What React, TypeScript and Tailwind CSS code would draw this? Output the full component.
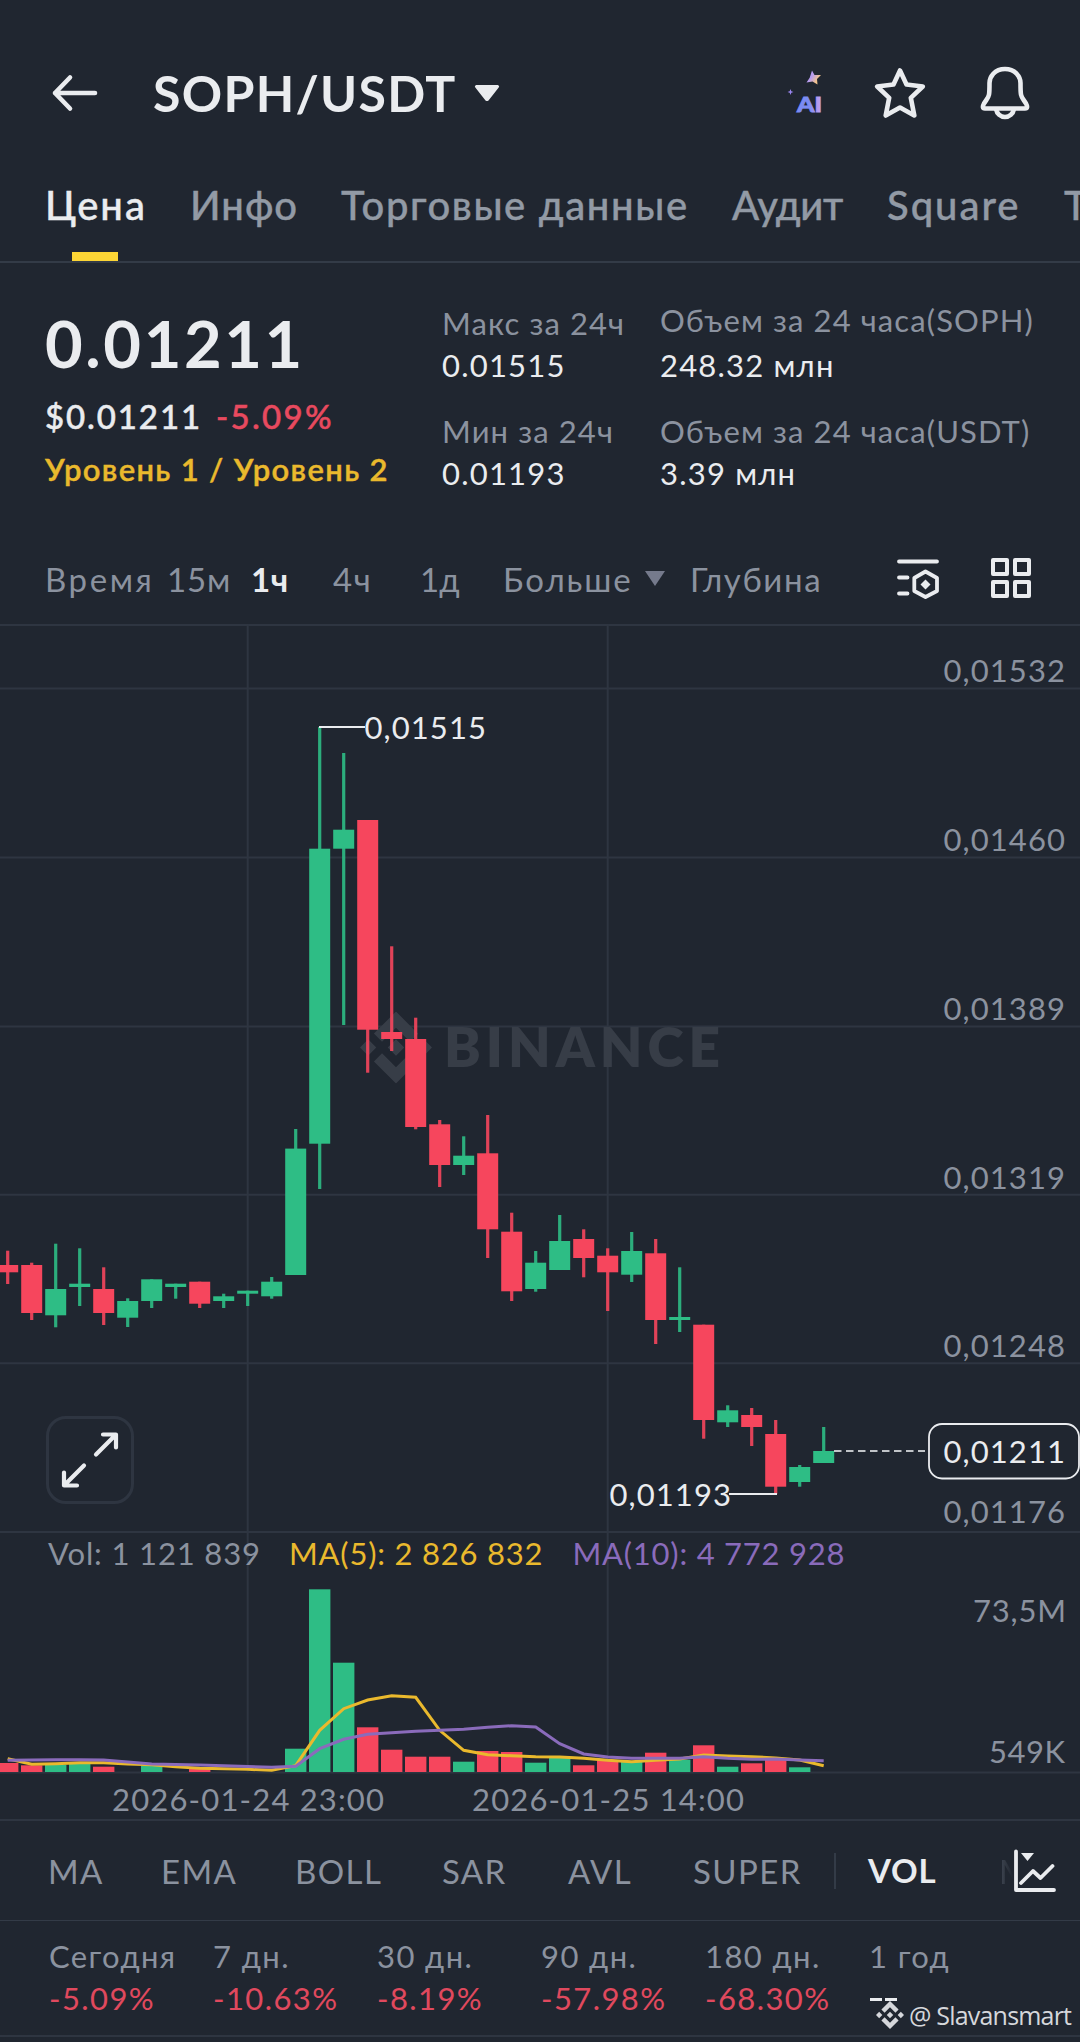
import clsx from "clsx";

const UP = "#2ebd85";
const DOWN = "#f6465d";
const STEP = 24;
const FIRST_X = 7.7;
const VOL_BASE = 1772;

// [direction, body top, body bottom, wick top, wick bottom]
const candles: [number, number, number, number, number][] = [
  [0, 1265, 1272.3, 1250.7, 1284],
  [0, 1265, 1313, 1262.7, 1320],
  [1, 1289, 1315.3, 1243.7, 1327.3],
  [1, 1283.7, 1287, 1248.3, 1306],
  [0, 1289, 1313, 1267.3, 1325],
  [1, 1301, 1317.7, 1298.3, 1327],
  [1, 1279.3, 1301, 1279.3, 1308],
  [1, 1283.7, 1287, 1283.7, 1298.7],
  [0, 1281.7, 1303.7, 1281.7, 1308],
  [1, 1296.3, 1301, 1293.7, 1308],
  [1, 1290.7, 1293.7, 1290.7, 1306],
  [1, 1281.7, 1296.3, 1277, 1298.7],
  [1, 1148.6, 1275, 1129, 1275],
  [1, 848.7, 1143.7, 727, 1189],
  [1, 829.7, 848.7, 753, 1025],
  [0, 820, 1029.7, 820, 1072.7],
  [0, 1032, 1039, 946.3, 1051],
  [0, 1039, 1127, 1017.7, 1129.3],
  [0, 1124.3, 1165, 1120, 1187],
  [1, 1155.7, 1165, 1136.3, 1175],
  [0, 1153.3, 1229.3, 1115, 1258],
  [0, 1231.7, 1291.3, 1212.7, 1301],
  [1, 1262.7, 1289, 1251, 1291.7],
  [1, 1241, 1270, 1215, 1270],
  [0, 1239, 1258, 1229.3, 1277.3],
  [0, 1255.7, 1272.3, 1248.3, 1311],
  [1, 1251, 1274.7, 1232, 1282],
  [0, 1253.3, 1320, 1239, 1344],
  [1, 1317, 1320, 1267.3, 1332],
  [0, 1324.7, 1420, 1324.7, 1438.7],
  [1, 1410.3, 1422.3, 1405.3, 1427],
  [0, 1415, 1427, 1408, 1446],
  [0, 1434, 1486.7, 1420, 1494],
  [1, 1467, 1482, 1465, 1486.7],
  [1, 1451, 1463, 1427, 1463],
];

const volumes = [
  9, 6.7, 7.3, 8.3, 5.3, 0, 6.3, 0, 3, 0, 0, 0, 23.3, 182.7, 109.3, 44.7, 22.3, 15.3, 15.3, 10.3, 21, 20, 9.3, 14, 6.7,
  11.7, 10, 19.3, 12.3, 26.7, 5.3, 8.7, 12.3, 4.7, 0,
];
const ma5 = [
  13.3, 7.7, 8.3, 9.3, 9.3, 8, 7.3, 5.3, 3.7, 3.3, 2.7, 1.7, 6.3, 41.7, 63.3, 72, 76.3, 74.7, 41.7, 21.7, 17.3, 16.3,
  15.3, 15, 13.7, 11.7, 10.3, 11.7, 13, 17, 16, 15.3, 14, 12, 6.3,
];
const ma10 = [
  11.7, 12, 12.3, 12.3, 12, 10, 8, 7.5, 7, 6.3, 5.5, 4.7, 5.7, 23.3, 32.7, 37.7, 39.3, 40.7, 41.7, 42.7, 44.7, 46.3,
  45, 28.3, 18, 15, 13.7, 13.7, 13.7, 15.3, 13.7, 12.7, 13, 12, 11.3,
];

const priceLines = [
  { y: 688.5, label: "0,01532" },
  { y: 857.5, label: "0,01460" },
  { y: 1026.5, label: "0,01389" },
  { y: 1194.7, label: "0,01319" },
  { y: 1363.3, label: "0,01248" },
];

const tabs = [
  { name: "Цена", cls: "w-[145px] tracking-[2px]" },
  { name: "Инфо", cls: "w-[151px] tracking-[1px]" },
  { name: "Торговые данные", cls: "w-[391px] tracking-[1.65px]" },
  { name: "Аудит", cls: "w-[155px] -tracking-[0.3px]" },
  { name: "Square", cls: "w-[177px] tracking-[2px]" },
  { name: "Т", cls: "" },
];

const indicators = [
  { name: "MA", cls: "w-[113px]" },
  { name: "EMA", cls: "w-[134px]" },
  { name: "BOLL", cls: "w-[147px]" },
  { name: "SAR", cls: "w-[126px]" },
  { name: "AVL", cls: "w-[125px]" },
  { name: "SUPER", cls: "w-[141px]" },
];

const periods = [
  { name: "Сегодня", value: "-5.09%" },
  { name: "7 дн.", value: "-10.63%" },
  { name: "30 дн.", value: "-8.19%" },
  { name: "90 дн.", value: "-57.98%" },
  { name: "180 дн.", value: "-68.30%" },
  { name: "1 год", value: "--" },
];

const x = (i: number) => FIRST_X + i * STEP;
const line = (values: number[]) => values.map((v, i) => `${x(i)},${VOL_BASE - v}`).join(" ");

function BinanceMark(props: React.SVGProps<SVGSVGElement>) {
  return (
    <svg viewBox="0 0 126.61 126.61" {...props}>
      <path d="M38.73 53.2 63.3 28.63 87.89 53.21 102.19 38.91 63.3 0 24.43 38.9ZM0 63.31 14.3 49 28.6 63.31 14.3 77.61ZM38.73 73.41 63.3 97.98 87.89 73.4 102.2 87.69 63.3 126.61 24.43 87.74ZM98 63.31 112.3 49 126.6 63.3 112.3 77.61ZM77.83 63.3 63.3 48.78 48.77 63.3 63.3 77.82Z" />
    </svg>
  );
}

function Header() {
  return (
    <div className="flex items-center h-24 mt-[45px] pl-[50px] pr-[49px]">
      <svg className="w-12 h-10 shrink-0" viewBox="0 0 48 40" fill="none" stroke="#eaecef" strokeWidth="4.6" strokeLinecap="round" strokeLinejoin="round">
        <path d="M20 4.5 5 20l15 15.5M5 20h40" />
      </svg>
      <div className="ml-[55px] text-[50px] leading-none font-bold tracking-[1.3px] text-[#eaecef]">SOPH/USDT</div>
      <svg className="w-[26px] h-[18px] ml-[17px]" viewBox="0 0 26 18">
        <path d="M2 1h22q2 1 .7 2.5L14.5 16.5q-1.5 1.2-3 0L1.3 3.5Q0 2 2 1Z" fill="#eaecef" />
      </svg>
      <svg className="w-9 h-[46px] ml-auto" viewBox="0 0 36 46">
        <defs>
          <linearGradient id="ai" x1="0" x2="1">
            <stop offset="0.5" stopColor="#7b8cf3" />
            <stop offset="1" stopColor="#c9a2f0" />
          </linearGradient>
          <linearGradient id="spark" x1="0" y1="0" x2="1" y2="0.6">
            <stop offset="0.45" stopColor="#b79cf0" />
            <stop offset="0.85" stopColor="#f3c48c" />
          </linearGradient>
        </defs>
        <path d="m26 .5 2.5 4.500 6.500 0-4 4 .5 5.500-5-3-6 1 3.200-4.800Z" fill="url(#spark)" />
        <path d="m4.500 19 .8 2.200 2.200.8-2.200.8-.8 2.200-.8-2.200L1.500 22l2.200-.8Z" fill="#9a86f0" />
        <text x="11" y="41.500" fill="url(#ai)" stroke="url(#ai)" strokeWidth="0.8" className="text-[20px] font-black" textLength="25" lengthAdjust="spacingAndGlyphs">AI</text>
      </svg>
      <svg className="w-[52px] h-[54px] ml-[52px]" viewBox="0 0 52 54" fill="none" stroke="#eaecef" strokeWidth="4.6" strokeLinejoin="round">
        <path d="m26 4.5 6.5 14 16.3 2-12 11.300 3.500 17.700L26 41.500l-14.300 8 3.500-17.700-12-11.300 16.300-2Z" />
      </svg>
      <svg className="w-[52px] h-[54px] ml-[53px]" viewBox="0 0 52 54" fill="none" stroke="#eaecef" strokeWidth="4.6" strokeLinejoin="round">
        <path d="M26 3C15.500 3 10.500 11 10.500 17c0 15.500-.5 12.500-5.500 20.500-1.600 3-1.500 5 1 5h40c2.500 0 2.600-2 1-5-5-8-5.500-5-5.500-20.500C41.500 11 36.500 3 26 3Z" />
        <path d="M17 43c1 5 4.500 8 9 8s8-3 9-8" />
      </svg>
    </div>
  );
}

function Tabs() {
  return (
    <div className="flex items-center h-[122px] pt-2 pl-[45px] overflow-hidden border-b-2 border-[#333b47] text-[40px] font-medium [-webkit-text-stroke:0.4px] relative">
      {tabs.map((t, i) => (
        <div key={t.name} className={clsx("shrink-0 whitespace-nowrap", t.cls, i === 0 ? "text-[#eaecef]" : "text-[#929aa5]")}>
          {t.name}
        </div>
      ))}
      <div className="absolute left-[72px] bottom-0 w-[46px] h-[9px] bg-[#fcd535]" />
    </div>
  );
}

function Stat({ label, value, cls }: { label: string; value: string; cls?: string }) {
  return (
    <div className="flex flex-col leading-[42px] text-[31px] whitespace-nowrap">
      <div className={clsx("text-[#8b929f] tracking-[1.1px]", cls)}>{label}</div>
      <div className="text-[#eaecef] tracking-[1.2px]">{value}</div>
    </div>
  );
}

function Summary() {
  return (
    <div className="flex h-[269px] pl-[45px]">
      <div className="w-[397px] pt-8 whitespace-nowrap">
        <div className="text-[65px] leading-[96px] font-bold tracking-[2.6px] text-[#eaecef]">0.01211</div>
        <div className="flex gap-[14px] text-[33px] leading-[50px] font-medium [-webkit-text-stroke:0.5px]">
          <span className="text-[#eaecef] tracking-[1.9px]">$0.01211</span>
          <span className="text-[#e84a5f] tracking-[2.3px]">-5.09%</span>
        </div>
        <div className="text-[31px] leading-[56px] font-semibold tracking-[1.35px] text-[#eab92d] [-webkit-text-stroke:0.4px]">Уровень 1 / Уровень 2</div>
      </div>
      <div className="w-[218px] pt-[39px] flex flex-col gap-6">
        <Stat label="Макс за 24ч" value="0.01515" />
        <Stat label="Мин за 24ч" value="0.01193" />
      </div>
      <div className="pt-9 flex flex-col gap-6">
        <Stat label="Объем за 24 часа(SOPH)" value="248.32 млн" cls="pb-[3px]" />
        <Stat label="Объем за 24 часа(USDT)" value="3.39 млн" />
      </div>
    </div>
  );
}

function Toolbar() {
  return (
    <div className="flex items-center h-[92px] pl-[45px] text-[33px] leading-[42px] text-[#8b929f] whitespace-nowrap">
      <div className="w-[122px] pt-px tracking-[2.6px]">Время</div>
      <div className="w-[84px] pt-px tracking-[0.8px]">15м</div>
      <div className="w-[82px] pt-px font-bold tracking-[0.5px] text-[#eaecef]">1ч</div>
      <div className="w-[87px] pt-px tracking-[1.5px]">4ч</div>
      <div className="w-[83px] pt-px">1д</div>
      <div className="w-[142px] pt-px tracking-[1.9px]">Больше</div>
      <svg className="w-5 h-[15px] mr-[25px]" viewBox="0 0 20 15">
        <path d="M0 0h20L10 15Z" fill="#757a8c" />
      </svg>
      <div className="pt-px tracking-[1.6px]">Глубина</div>
      <svg className="w-[42px] h-10 ml-auto mt-0.5" viewBox="0 0 42 40" fill="none" stroke="#eaecef" strokeWidth="3.8" strokeLinecap="round" strokeLinejoin="round">
        <path d="M2 2.500h38M2 18.500h8.500M2 34.500h8.500" />
        <path d="M28.500 12.500 40 19v13L28.500 38 17.300 32V19Z" />
        <path d="m28.500 20.500 5 5-5 5-5-5Z" fill="#eaecef" stroke="none" />
      </svg>
      <svg className="w-10 h-10 ml-[52px] mr-[49px]" viewBox="0 0 40 40" fill="none" stroke="#eaecef" strokeWidth="4" strokeLinejoin="round">
        <path d="M2 2h14v14H2ZM24 2h14v14H24ZM2 24h14v14H2ZM24 24h14v14H24Z" />
      </svg>
    </div>
  );
}

function Chart() {
  return (
    <div className="relative">
      <svg className="block w-[1080px] h-[1197px] text-[31px]" viewBox="0 624 1080 1197" fill="#8b929f">
        <g stroke="#2e3541" strokeWidth="2">
          <path d="M0 625h1080" />
          {priceLines.map((p) => (
            <path key={p.label} d={`M0 ${p.y}h1080`} />
          ))}
          <path d="M0 1532h1080M0 1772.500h1080M0 1820h1080M247.700 624v1148M607.700 624v1148" />
        </g>

        <BinanceMark x="360" y="1011.5" width="72" height="72" fill="#373d47" />
        <text x="444" y="1067" fill="#373d47" className="text-[55px] font-extrabold" textLength="276">BINANCE</text>

        {candles.map(([dir, top, bottom, high, low], i) => (
          <g key={i} fill={dir ? UP : DOWN}>
            <rect x={x(i) - 1.6} y={high} width="3.2" height={low - high} opacity="0.9" />
            <rect x={x(i) - 10.5} y={top} width="21" height={bottom - top} />
          </g>
        ))}

        {volumes.map((v, i) => (
          <rect key={i} x={x(i) - 10.7} y={VOL_BASE - v} width="21.4" height={v} fill={candles[i][0] ? UP : DOWN} />
        ))}
        <polyline points={line(ma5)} fill="none" stroke="#eab92d" strokeWidth="3" />
        <polyline points={line(ma10)} fill="none" stroke="#8a6bbb" strokeWidth="3" />

        <g stroke="#eaecef" strokeWidth="2">
          <path d="M319 727h46M729 1494h48" />
          <path d="M834 1451h91" strokeDasharray="7.5 4.5" opacity="0.8" />
        </g>
        <g fill="#eaecef">
          <text x="364.5" y="739" textLength="121.5">0,01515</text>
          <text x="609.5" y="1505.7" textLength="121.5">0,01193</text>
        </g>

        {priceLines.map((p) => (
          <text key={p.label} x="943.5" y={p.y - 6.2} textLength="121.5">{p.label}</text>
        ))}
        <text x="943.5" y="1523" textLength="121.5">0,01176</text>
        <rect x="929" y="1424" width="150" height="54.5" rx="13" fill="#202630" stroke="#eaecef" strokeWidth="1.8" />
        <text x="943.5" y="1463" textLength="121.5" fill="#eaecef">0,01211</text>

        <text x="48" y="1565" textLength="212">Vol: 1 121 839</text>
        <text x="289" y="1565" textLength="253.5" fill="#eab92d">MA(5): 2 826 832</text>
        <text x="572.5" y="1565" textLength="272" fill="#8a6bbb">MA(10): 4 772 928</text>
        <text x="973" y="1622" textLength="93">73,5M</text>
        <text x="989" y="1763" textLength="76">549K</text>
        <text x="112" y="1811" textLength="272">2026-01-24 23:00</text>
        <text x="472" y="1811" textLength="272">2026-01-25 14:00</text>
      </svg>

      <button className="absolute left-[46px] top-[792px] w-[88px] h-[88px] rounded-[20px] border-[3px] border-[#2e3541] bg-[#202630] flex items-center justify-center">
        <svg className="w-[60px] h-[60px]" viewBox="0 0 60 60" fill="none" stroke="#eaecef" strokeWidth="4.2" strokeLinecap="round" strokeLinejoin="round">
          <path d="M43 4.500h13v13M55.500 5 36 24.500M17 55.500H4v-13M4.500 55 24 35.500" />
        </svg>
      </button>
    </div>
  );
}

function Indicators() {
  return (
    <div className="flex items-center h-[100px] pl-12 text-[33px] text-[#8b929f] tracking-[1.4px] border-b border-[#333b47]">
      {indicators.map((i) => (
        <div key={i.name} className={clsx("shrink-0 pt-0.5", i.cls)}>{i.name}</div>
      ))}
      <div className="w-0.5 h-9 bg-[#333b47]" />
      <div className="w-[131px] ml-8 pt-px font-bold text-[#eaecef] tracking-[0.8px]">VOL</div>
      <div className="w-[14px] pt-0.5 bg-gradient-to-r from-[#424954] to-[#202630] bg-clip-text text-transparent">M</div>
      <svg className="w-11 h-11 shrink-0" viewBox="0 0 44 44" fill="none" stroke="#eaecef" strokeWidth="3.8" strokeLinecap="round" strokeLinejoin="round">
        <path d="M3 2.500v38.500h38M8 34l12-12 7.500 7L39.500 17" />
        <path d="M8 4h13l-6.500 8Z" fill="#eaecef" stroke="none" />
      </svg>
    </div>
  );
}

function Performance() {
  return (
    <div className="relative flex h-[116px] pt-[14px] pl-[49px] text-[31px] leading-[42px] whitespace-nowrap border-b-2 border-[#2e3541]">
      {periods.map((p) => (
        <div key={p.name} className="w-[164px] shrink-0">
          <div className="text-[#8b929f] tracking-[1.4px]">{p.name}</div>
          {p.value === "--" ? (
            <div className="flex gap-[3px] pt-[21px] pl-px text-[#eaecef] leading-none">
              <span className="w-3 h-[3px] bg-current" />
              <span className="w-3 h-[3px] bg-current" />
            </div>
          ) : (
            <div className="text-[#e0495e] tracking-[1.4px]">{p.value}</div>
          )}
        </div>
      ))}
      <div className="absolute left-[876px] top-[80px] flex items-center gap-[5px] font-['Open_Sans'] text-[25px] leading-7 -tracking-[0.8px] text-[#d5d7db]">
        <BinanceMark className="w-7 h-7" fill="#d5d7db" />
        @ Slavansmart
      </div>
    </div>
  );
}

export default function App() {
  return (
    <div className="w-[1080px] h-[2042px] overflow-hidden bg-[#202630] font-[Lato,'Open_Sans',sans-serif]">
      <Header />
      <Tabs />
      <Summary />
      <Toolbar />
      <Chart />
      <Indicators />
      <Performance />
    </div>
  );
}
